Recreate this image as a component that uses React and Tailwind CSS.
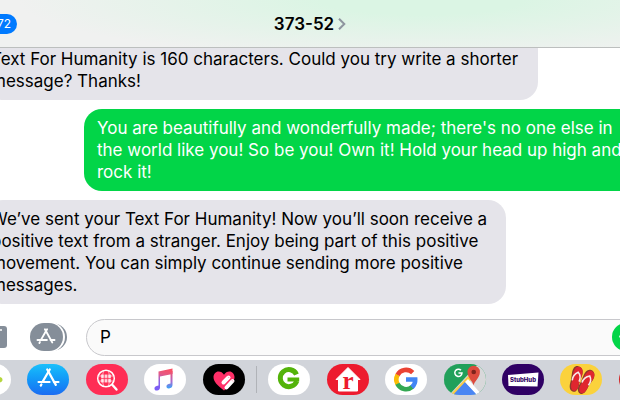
const AppStoreMark = ({ className }) => (
  <svg viewBox="0 0 24 22" fill="none" stroke="#fff" strokeWidth="2.3" strokeLinecap="round" className={className} aria-hidden="true">
    <path d="M13.3 1.5 5.8 14.5" />
    <path d="M10.7 1.5 19.6 17.6" />
    <path d="M1.6 14.6h11.5M17.6 14.6h4.8" />
    <path d="m4.6 17.2-.7 1.2" />
  </svg>
);

const ActivityIcon = () => (
  <svg viewBox="0 0 42 31" className="size-full" aria-hidden="true">
    <path d="M22 13h8c2.500 0 3.500 1.500 3.500 3s-1.500 2.500-3.500 2.500h-8z" fill="#b5d63d" />
    <circle cx="19" cy="11" r="4" fill="#f6b93b" />
    <circle cx="19" cy="20" r="4" fill="#4a9bea" />
  </svg>
);

const ImageSearchIcon = () => (
  <svg viewBox="0 0 42 31" fill="none" stroke="#fff" className="size-full" aria-hidden="true">
    <circle cx="20" cy="14.500" r="8.300" strokeWidth="1.500" />
    <path d="M15 10.500h10v8H15z" fill="#fff" fillOpacity="0.700" stroke="none" />
    <path d="M17.500 7c-1.200 4.500-1.200 10.500 0 15M22.500 7c1.200 4.500 1.200 10.500 0 15M12.500 12h15M12.500 17h15" strokeWidth="0.900" strokeOpacity="0.700" />
    <path d="M18.300 8v13M21.700 8v13M14 14.500h12" stroke="#ff2d55" strokeWidth="0.700" />
    <path d="m26.500 21 4 4.500" strokeWidth="2.400" strokeLinecap="round" />
  </svg>
);

const MusicIcon = () => (
  <svg viewBox="0 0 42 31" className="size-full" aria-hidden="true">
    <defs>
      <linearGradient id="note" x1="0.700" y1="0" x2="0.500" y2="1">
        <stop offset="0" stopColor="#fb4f63" />
        <stop offset="0.300" stopColor="#e45a86" />
        <stop offset="0.650" stopColor="#8a63e8" />
        <stop offset="1" stopColor="#7a5cf7" />
      </linearGradient>
      <linearGradient id="noteStem" x1="0" y1="0" x2="0" y2="1">
        <stop offset="0" stopColor="#fb4f63" />
        <stop offset="0.600" stopColor="#a86bd0" />
        <stop offset="1" stopColor="#35a5fb" />
      </linearGradient>
    </defs>
    <path d="M14.500 7.500 28.500 4.500V10L16 12.500V23a3 3 0 0 1-3 3.500c-3 .5-3.500-3.500-.5-4.500l2-.5z" fill="url(#note)" />
    <path d="M26.500 7h2v14c0 2-1.500 3.200-3.500 3.500-3 .4-3.500-3.500-.5-4.500l2-.5z" fill="url(#noteStem)" />
  </svg>
);

const HeartIcon = () => (
  <svg viewBox="0 0 42 31" className="size-full" aria-hidden="true">
    <path d="M21 26.500C14 21 10.500 17.500 10.500 13c0-3 2.300-5.500 5-5.500 2.300 0 4.300 1.200 5.500 3.300 1.200-2.100 3.200-3.300 5.500-3.300 2.700 0 5 2.500 5 5.500C31.500 17.500 28 21 21 26.500z" fill="#ff2f68" />
    <g stroke="#fff" strokeWidth="4" strokeLinecap="round">
      <path d="m20.500 18.500 5-5" />
      <path d="m23.500 23.500 6-6.500" />
    </g>
    <path d="m21.500 21.300 6-6.200" stroke="#ff2f68" strokeWidth="0.900" />
    <path d="m25 12.800 1.300 1.300M29 16.300l1.300 1.300" stroke="#ff9db6" strokeWidth="1" />
  </svg>
);

const GrouponIcon = () => (
  <svg viewBox="0 0 42 31" fill="none" stroke="#53b30a" strokeWidth="5" className="size-full" aria-hidden="true">
    <path d="M28.500 10.500A8.500 8.500 0 1 0 28.800 17" />
    <path d="M19.500 15.500h11.700" strokeWidth="3.800" />
  </svg>
);

const RealtorIcon = () => (
  <svg viewBox="0 0 42 31" className="size-full" aria-hidden="true">
    <path d="m21 3.500 12 12h-2.500v11.500h-19V15.500H9z" fill="#fff" stroke="#fff" strokeLinejoin="round" />
    <text x="21" y="25" textAnchor="middle" fontSize="25" fontWeight="700" fill="#ed1b2e" className="font-['Liberation_Serif',serif]">r</text>
  </svg>
);

const GoogleIcon = () => (
  <svg viewBox="0 0 42 31" fill="none" strokeWidth="4.600" className="size-full" aria-hidden="true">
    <path d="M27.700 8.700A9.600 9.600 0 0 0 12.400 11.200" stroke="#ea4335" />
    <path d="M12.600 10.800a9.600 9.600 0 0 0 0 9.400" stroke="#fbbc05" />
    <path d="M12.400 19.800a9.600 9.600 0 0 0 15 3" stroke="#34a853" />
    <path d="M27 23.200a9.600 9.600 0 0 0 3.200-7.700H21" stroke="#4285f4" />
  </svg>
);

const MapsIcon = () => (
  <svg viewBox="0 0 42 31" className="size-full" aria-hidden="true">
    <rect width="42" height="31" fill="#d8d8da" />
    <path d="M0 0h34L5 31H0z" fill="#21a05a" />
    <path d="M30 6 6 31h6L31 12z" fill="#fbcb43" />
    <path d="m21 18-12 13h25z" fill="#4a86f3" />
    <path d="m24 15 14 16h-5L21 18z" fill="#fff" />
    <path d="M17 6.300A3.600 3.600 0 1 0 18 9h-3.500" fill="none" stroke="#fff" strokeWidth="1.500" />
    <path d="M29.500 21.500c-.4-4-6-7.500-6-13.500a6.200 6.200 0 0 1 12.400 0c0 6-5.800 9.500-6.400 13.500z" fill="#dd4b3e" />
    <circle cx="29.700" cy="8" r="2.300" fill="#7f231c" />
  </svg>
);

const StubHubIcon = () => (
  <svg viewBox="0 0 42 31" className="size-full" aria-hidden="true">
    <path d="m6 11 30.500-2.500-1 14-29-.5z" fill="#fff" />
    <text x="21" y="18" textAnchor="middle" fontSize="6" fontWeight="800" fill="#2f0064" className="font-[Inter,sans-serif]">StubHub</text>
  </svg>
);

const FlipFlopsIcon = () => (
  <svg viewBox="0 0 42 31" className="size-full" aria-hidden="true">
    {['rotate(10 16 15)', 'translate(10 3) rotate(24 16 15)'].map((transform) => (
      <g key={transform} transform={transform}>
        <path d="M16 2c4 0 6 3.500 5.500 8-.4 3-1.500 5-1.500 9s-1 9-4.500 9-5-4-4.500-8 0-6 0-10c0-5 1.500-8 5-8z" fill="#8c3b2b" />
        <path d="M16.800 2.500c3.500 0 5 3.500 4.500 7.500-.4 3-1.500 5-1.500 8.500s-.5 8.500-3.600 8.500-4.200-3.500-3.900-7 0-6 0-9.500c0-4 1.500-8 4.500-8z" fill="#e0262f" />
        <path d="M12.500 17c-.3-4 1.500-7 4.500-9 2.500 2 3.500 5 2.500 9" fill="none" stroke="#f7e9e9" strokeWidth="1.600" />
      </g>
    ))}
  </svg>
);

const YelpIcon = () => (
  <svg viewBox="0 0 42 31" className="size-full" aria-hidden="true">
    <path d="M21 5v8M21 26v-8M12 12l6 3M30 12l-6 3" stroke="#fff" strokeWidth="3" strokeLinecap="round" />
  </svg>
);

const recentApps = [
  { name: 'Activity', bg: 'bg-white', Icon: ActivityIcon },
  { name: 'App Store', bg: 'bg-linear-to-b from-[#1cc0fb] to-[#1c6cf2]', Icon: () => <AppStoreMark className="w-[23px]" /> },
  { name: '#images', bg: 'bg-[#ff2d55]', Icon: ImageSearchIcon },
  { name: 'Music', bg: 'bg-white', Icon: MusicIcon },
  { name: 'Digital Touch', bg: 'bg-black', Icon: HeartIcon },
];

const installedApps = [
  { name: 'Groupon', bg: 'bg-white', Icon: GrouponIcon },
  { name: 'Realtor.com', bg: 'bg-[#ed1b2e]', Icon: RealtorIcon },
  { name: 'Google', bg: 'bg-white', Icon: GoogleIcon },
  { name: 'Google Maps', bg: 'bg-[#21a05a]', Icon: MapsIcon },
  { name: 'StubHub', bg: 'bg-[#2f0064]', Icon: StubHubIcon },
  { name: 'Flip Flops', bg: 'bg-[#fbd23c]', Icon: FlipFlopsIcon },
  { name: 'Yelp', bg: 'bg-[#d32323]', Icon: YelpIcon },
];

const messages = [
  {
    id: 1,
    lines: ['Text For Humanity is 160 characters. Could you try write a shorter', 'message? Thanks!'],
    box: 'w-[553px] pt-8',
  },
  {
    id: 2,
    sent: true,
    lines: ["You are beautifully and wonderfully made; there's no one else in", 'the world like you! So be you! Own it! Hold your head up high and', 'rock it!'],
  },
  {
    id: 3,
    lines: [
      'We’ve sent your Text For Humanity! Now you’ll soon receive a',
      'positive text from a stranger. Enjoy being part of this positive',
      'movement. You can simply continue sending more positive',
      'messages.',
    ],
    box: 'w-[521px] pt-2',
  },
];

const Bubble = ({ sent, lines, box }) => (
  <li
    className={`shrink-0 rounded-[18px] pb-2 whitespace-nowrap ${
      sent ? 'ml-[84px] -mr-6 bg-[#02d548] pt-2 pl-[13px] text-white' : `-ml-[15px] bg-[#e5e4ea] pl-[6px] ${box}`
    }`}
  >
    {lines.map((line) => (
      <p key={line}>{line}</p>
    ))}
  </li>
);

const AppButton = ({ name, bg, Icon }) => (
  <button
    type="button"
    aria-label={name}
    className={`flex h-[31px] w-[42px] shrink-0 items-center justify-center overflow-hidden rounded-full ${bg}`}
  >
    <Icon />
  </button>
);

const App = () => (
  <div className="flex h-screen flex-col overflow-hidden bg-white font-[Inter,'Liberation_Sans',sans-serif] text-[17px] leading-[22px] text-black">
    {/* Header */}
    <header className="grid h-12 shrink-0 grid-cols-[1fr_auto_1fr] items-center border-b border-[#bcbfbe] bg-[#f0f1f0] bg-[radial-gradient(ellipse_65%_125%_at_68%_0%,#dbf5e4_25%,#f0f1f000_100%)]">
      <button type="button" aria-label="Back" className="-ml-5 h-5 w-[37px] rounded-full bg-[#007aff] pr-[6px] text-right text-[12px] leading-5 text-white">
        72
      </button>
      <button type="button" className="flex items-center gap-1 font-semibold">
        373-52
        <svg viewBox="0 0 8 12" fill="none" stroke="#8e959f" strokeWidth="2" className="h-3 w-2" aria-hidden="true">
          <path d="m1 .8 5.300 5.200L1 11.200" />
        </svg>
      </button>
    </header>

    {/* Conversation */}
    <main className="flex min-h-0 flex-1 flex-col overflow-hidden pb-2">
      <ul className="flex min-h-0 flex-1 flex-col justify-end gap-[9px]">
        {messages.map((message) => (
          <Bubble key={message.id} {...message} />
        ))}
      </ul>
    </main>

    {/* Compose bar */}
    <form className="flex h-12 shrink-0 items-center pt-[2px]">
      <button type="button" aria-label="Camera" className="-ml-5 flex h-[22px] w-[27px] shrink-0 justify-end rounded-[3px] bg-[#858e99] pt-[3px] pr-[5px]">
        <span className="size-[2px] rounded-full bg-white" />
      </button>
      <button type="button" aria-label="Apps" className="ml-[22px] shrink-0">
        <svg viewBox="0 0 39 28" className="h-7 w-[39px]" aria-hidden="true">
          <rect x="5" y="0.500" width="33" height="27" rx="13.500" fill="#858e99" />
          <rect x="1" y="-1" width="35" height="30" rx="15" fill="#fff" />
          <rect x="1" y="0" width="33" height="28" rx="14" fill="#858e99" />
          <svg x="7" y="5" width="20" height="18">
            <AppStoreMark />
          </svg>
        </svg>
      </button>
      <div className="relative -mr-6 ml-[18px] flex-1">
        <input
          type="text"
          aria-label="Text Message"
          defaultValue="P"
          className="block h-[37px] w-full rounded-full border border-[#c8c8cc] bg-[#fafafa] pl-[13px] outline-none"
        />
        <button type="submit" aria-label="Send" className="absolute top-1 right-1 flex size-7 items-center justify-center rounded-full bg-[#02d548]">
          <svg viewBox="0 0 16 16" fill="none" stroke="#fff" strokeWidth="2.500" strokeLinecap="round" className="size-4" aria-hidden="true">
            <path d="M8 14V2M2.500 7.500 8 2l5.500 5.500" />
          </svg>
        </button>
      </div>
    </form>

    {/* App drawer */}
    <nav className="flex h-10 shrink-0 items-center bg-[#d1d4da] pb-[2px]">
      <div className="-mr-[41px] -ml-[31px] flex flex-1 items-center justify-between">
        {recentApps.map((app) => (
          <AppButton key={app.name} {...app} />
        ))}
        <div className="-mx-[5px] h-[27px] w-px bg-[#b0b3b8]" />
        {installedApps.map((app) => (
          <AppButton key={app.name} {...app} />
        ))}
      </div>
    </nav>
  </div>
);

export default App;
